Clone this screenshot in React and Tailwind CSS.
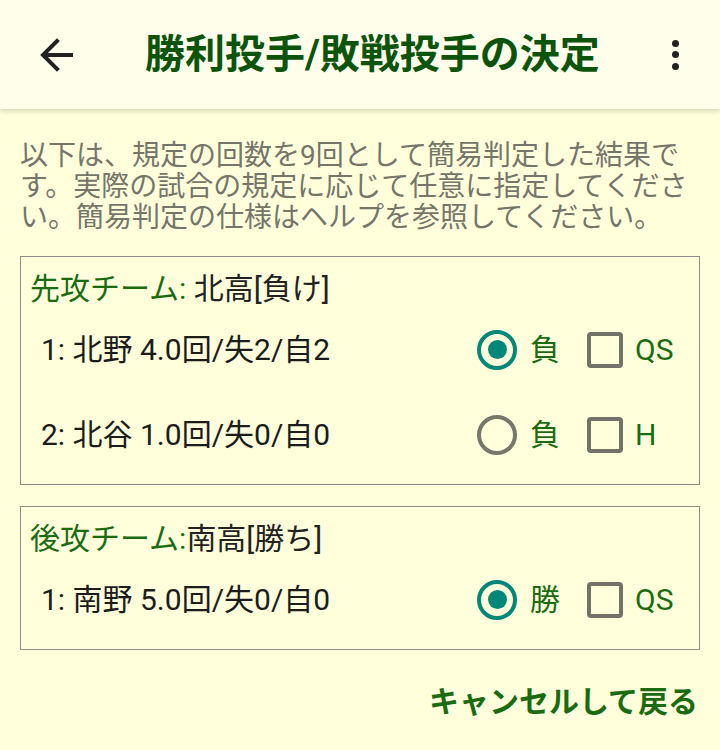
import React, { useState } from "react";

const font = { fontFamily: 'Roboto, "Noto Sans CJK JP", sans-serif' };

const Radio = ({ checked }) => (
  <span
    className={`flex h-[40px] w-[40px] shrink-0 items-center justify-center rounded-full border-[4px] ${
      checked ? "border-[#00877a]" : "border-[#77776c]"
    }`}
  >
    {checked && <span className="h-[19px] w-[19px] rounded-full bg-[#00877a]" />}
  </span>
);

const Checkbox = ({ checked }) => (
  <span
    className={`h-[36px] w-[36px] shrink-0 rounded-[4px] border-[4px] ${
      checked ? "border-[#00877a] bg-[#00877a]" : "border-[#72726a]"
    }`}
  />
);

const PitcherRow = ({ text, result, checked, extra }) => (
  <div className="flex h-[85px] items-center pl-[20px]">
    <p className="flex-1 text-[30px] text-[#1c1c1c]">{text}</p>
    <div className="flex w-[110px] items-center gap-[13px]">
      <Radio checked={checked} />
      <span className="text-[30px] text-[#1a6b12]">{result}</span>
    </div>
    <div className="flex w-[112px] items-center gap-[12px]">
      <Checkbox checked={false} />
      <span className="text-[30px] text-[#1a6b12]">{extra}</span>
    </div>
  </div>
);

const TeamBox = ({ label, team, rows }) => (
  <div className="border border-[#8c8c88] pb-[7px] pt-[14px]">
    <p className="pl-[9px] text-[30px] leading-[36px] text-[#222222]">
      <span className="text-[#1a6b12]">{label}</span>
      {team}
    </p>
    {rows.map((r) => (
      <PitcherRow key={r.text} {...r} />
    ))}
  </div>
);

export default function App() {
  const [menuOpen, setMenuOpen] = useState(false);

  return (
    <div className="min-h-[750px] w-[720px] bg-[#ffffdc]" style={font}>
      <header className="relative z-10 flex h-[109px] items-center bg-[#fefeea] shadow-[0_2px_5px_rgba(120,120,80,0.3)]">
        <button className="flex h-[109px] w-[112px] items-center pl-[39px]">
          <svg width="34" height="34" viewBox="0 0 34 34" fill="none">
            <path
              d="M33 17H5 M18 3 L4 17 L18 31"
              stroke="#222222"
              strokeWidth="4"
              strokeLinecap="square"
            />
          </svg>
        </button>
        <h1 className="ml-[33px] flex-1 text-[40px] font-bold text-[#0c540c]">
          勝利投手/敗戦投手の決定
        </h1>
        <button
          className="flex h-[109px] w-[88px] flex-col items-center justify-center gap-[4.5px] pr-[1px]"
          onClick={() => setMenuOpen(!menuOpen)}
        >
          <span className="h-[7px] w-[7px] rounded-full bg-[#222222]" />
          <span className="h-[7px] w-[7px] rounded-full bg-[#222222]" />
          <span className="h-[7px] w-[7px] rounded-full bg-[#222222]" />
        </button>
      </header>

      <div className="px-[20px]">
        <p className="pt-[31px] text-[28px] leading-[31px] text-[#75756a]">
          以下は、規定の回数を9回として簡易判定した結果です。実際の試合の規定に応じて任意に指定してください。簡易判定の仕様はヘルプを参照してください。
        </p>

        <div className="mt-[23px] flex flex-col gap-[21px]">
          <TeamBox
            label="先攻チーム: "
            team="北高[負け]"
            rows={[
              { text: "1: 北野 4.0回/失2/自2", result: "負", checked: true, extra: "QS" },
              { text: "2: 北谷 1.0回/失0/自0", result: "負", checked: false, extra: "H" },
            ]}
          />
          <TeamBox
            label="後攻チーム:"
            team="南高[勝ち]"
            rows={[
              { text: "1: 南野 5.0回/失0/自0", result: "勝", checked: true, extra: "QS" },
            ]}
          />
        </div>

        <div className="flex justify-end pt-[29px]">
          <button className="pr-[2px] text-[30px] font-bold text-[#1a6b12]">
            キャンセルして戻る
          </button>
        </div>
      </div>
    </div>
  );
}
